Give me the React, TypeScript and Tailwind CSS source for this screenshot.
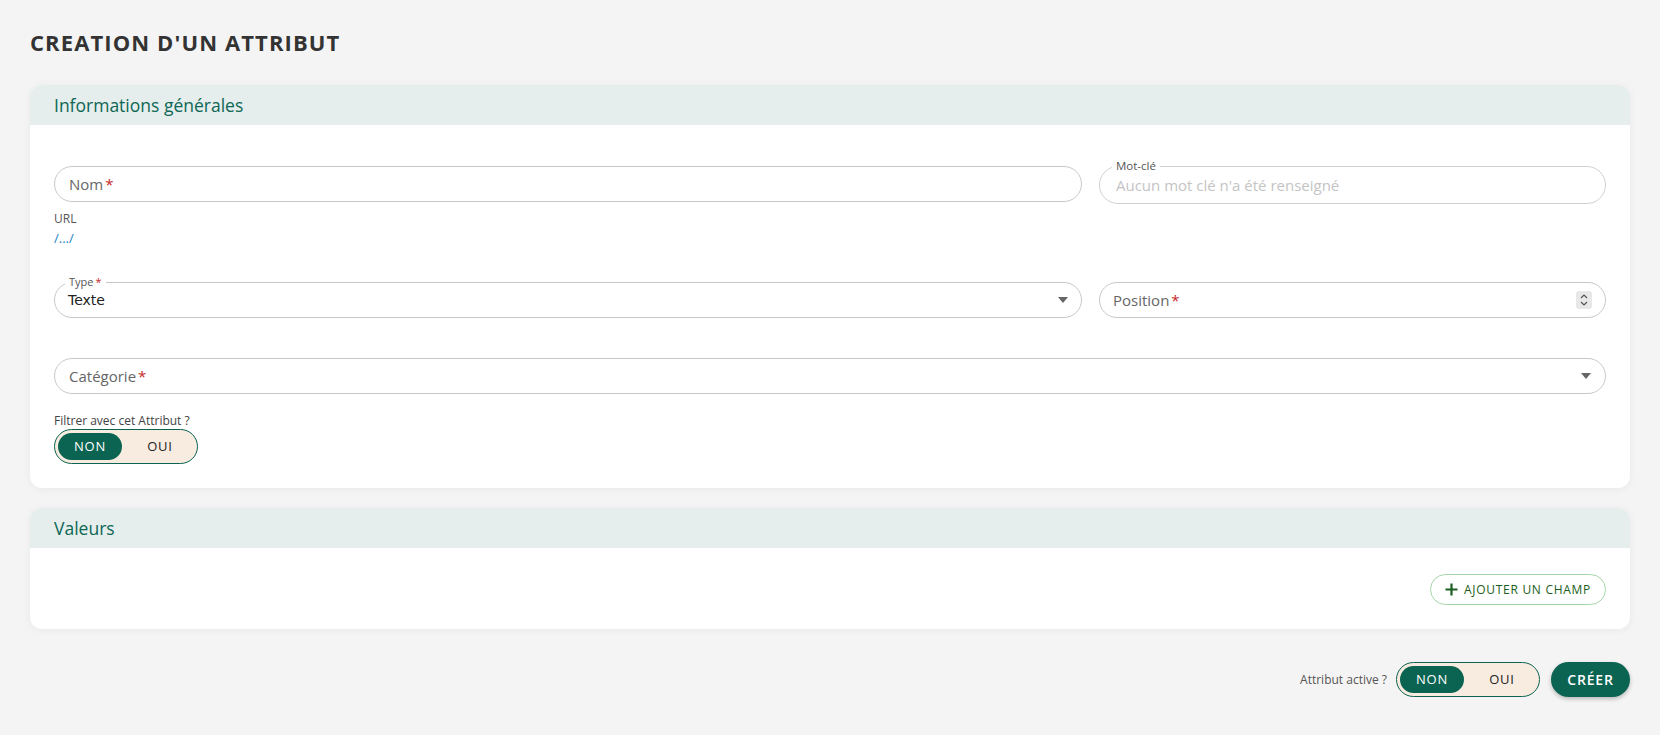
import React from "react";

const Star = () => <span className="text-[#c62828] ml-[2px]">*</span>;

function Caret() {
  return (
    <svg width="10" height="6" viewBox="0 0 10 6" className="shrink-0">
      <path d="M0 0 L10 0 L5 6 Z" fill="#666" />
    </svg>
  );
}

function Toggle() {
  return (
    <div className="flex items-center w-[144px] h-[35px] rounded-full border border-[#0b6452] bg-[#f8ece0] p-[3px]">
      <div className="h-full w-[64px] rounded-full bg-[#0b6452] text-white flex items-center justify-center text-[13px] tracking-[0.06em]">
        NON
      </div>
      <div className="flex-1 flex items-center justify-center text-[13px] tracking-[0.06em] text-[#222] pl-[4px]">
        OUI
      </div>
    </div>
  );
}

function SectionHeader({ title }: { title: string }) {
  return (
    <div className="h-[40px] bg-[#e5eeec] flex items-center px-[24px] text-[17.5px] text-[#0e6655]">
      {title}
    </div>
  );
}

export default function App() {
  return (
    <div
      className="min-h-[735px] bg-[#f4f4f4] px-[30px] pt-[26px] pb-[38px] text-[#333]"
      style={{ fontFamily: '"Open Sans", "Noto Sans", sans-serif' }}
    >
      <h1 className="text-[22px] leading-[32px] font-bold tracking-[0.05em] text-[#333]">
        CREATION D'UN ATTRIBUT
      </h1>

      <div className="mt-[27px] bg-white rounded-[12px] overflow-hidden shadow-[0_1px_8px_rgba(0,0,0,0.05)]">
        <SectionHeader title="Informations générales" />
        <div className="px-[24px] pt-[41px] pb-[24px]">
          <div className="grid grid-cols-[1028px_1fr] gap-x-[17px]">
            <div>
              <div className="h-[36px] rounded-full border border-[#c8c8c8] flex items-center px-[14px] text-[15px] text-[#666]">
                Nom<Star />
              </div>
              <div className="mt-[9px] text-[12px] leading-[16px] text-[#555]">URL</div>
              <div className="mt-[2px] text-[13px] leading-[18px] text-[#1a7fc1]">/.../</div>
            </div>
            <div className="relative h-[38px] rounded-full border border-[#d0d0d0] flex items-center px-[16px] text-[15px] text-[#c4c4c4]">
              <span className="absolute left-[12px] -top-[9px] bg-white px-[4px] text-[11.5px] leading-[16px] text-[#555]">
                Mot-clé
              </span>
              Aucun mot clé n'a été renseigné
            </div>
          </div>

          <div className="grid grid-cols-[1028px_1fr] gap-x-[17px] mt-[35px]">
            <div className="relative h-[36px] rounded-full border border-[#c8c8c8] flex items-center justify-between pl-[13px] pr-[13px]">
              <span className="absolute left-[10px] -top-[9px] bg-white px-[4px] text-[11px] leading-[16px] text-[#555]">
                Type<Star />
              </span>
              <span
                className="text-[14px] text-[#222]"
                style={{ fontFamily: '"DejaVu Sans", sans-serif' }}
              >
                Texte
              </span>
              <Caret />
            </div>
            <div className="h-[36px] rounded-full border border-[#c8c8c8] flex items-center justify-between pl-[13px] pr-[13px]">
              <span className="text-[15px] text-[#666]">
                Position<Star />
              </span>
              <div className="w-[16px] h-[18px] rounded-[3px] bg-[#e8e8e8] flex flex-col items-center justify-center gap-[2px]">
                <svg width="8" height="5" viewBox="0 0 8 5"><path d="M1 4 L4 1 L7 4" stroke="#555" strokeWidth="1.2" fill="none" /></svg>
                <svg width="8" height="5" viewBox="0 0 8 5"><path d="M1 1 L4 4 L7 1" stroke="#555" strokeWidth="1.2" fill="none" /></svg>
              </div>
            </div>
          </div>

          <div className="mt-[40px] h-[36px] rounded-full border border-[#c8c8c8] flex items-center justify-between pl-[14px] pr-[14px]">
            <span className="text-[15px] text-[#666]">
              Catégorie<Star />
            </span>
            <Caret />
          </div>

          <div className="mt-[19px] text-[12px] leading-[16px] text-[#444]">Filtrer avec cet Attribut ?</div>
          <div className="mt-[0px]">
            <Toggle />
          </div>
        </div>
      </div>

      <div className="mt-[20px] bg-white rounded-[12px] overflow-hidden shadow-[0_1px_8px_rgba(0,0,0,0.05)]">
        <SectionHeader title="Valeurs" />
        <div className="px-[24px] pt-[26px] pb-[24px] flex justify-end">
          <button className="h-[31px] w-[176px] rounded-full border border-[#a5d6a7] flex items-center justify-center gap-[6px] text-[12px] tracking-[0.06em] text-[#1b5e20]">
            <svg width="13" height="13" viewBox="0 0 13 13">
              <path d="M6.5 0.5 V12.5 M0.5 6.5 H12.5" stroke="#1b5e20" strokeWidth="2.2" />
            </svg>
            AJOUTER UN CHAMP
          </button>
        </div>
      </div>

      <div className="mt-[33px] flex items-center justify-end">
        <span className="text-[12px] text-[#555] mr-[9px]">Attribut active ?</span>
        <Toggle />
        <button className="ml-[11px] h-[35px] w-[79px] rounded-full bg-[#0b6452] text-white text-[14px] font-semibold tracking-[0.06em] shadow-[0_2px_4px_rgba(0,0,0,0.25)]">
          CRÉER
        </button>
      </div>
    </div>
  );
}
